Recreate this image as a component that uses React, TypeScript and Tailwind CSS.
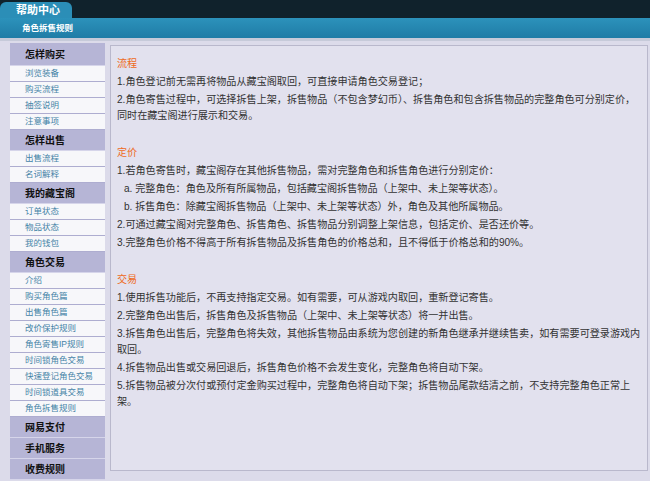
import React from 'react';

const font = { fontFamily: '"Liberation Sans", "Noto Sans CJK SC", sans-serif' };

type Group = { title: string; items: string[]; first?: boolean };

const groups: Group[] = [
  { title: '怎样购买', items: ['浏览装备', '购买流程', '抽签说明', '注意事项'], first: true },
  { title: '怎样出售', items: ['出售流程', '名词解释'] },
  { title: '我的藏宝阁', items: ['订单状态', '物品状态', '我的钱包'] },
  {
    title: '角色交易',
    items: [
      '介绍',
      '购买角色篇',
      '出售角色篇',
      '改价保护规则',
      '角色寄售IP规则',
      '时间锁角色交易',
      '快速登记角色交易',
      '时间锁道具交易',
      '角色拆售规则',
    ],
  },
  { title: '网易支付', items: [] },
  { title: '手机服务', items: [] },
  { title: '收费规则', items: [] },
];

const SideMenu = () => (
  <div className="w-[95px] shrink-0 flex flex-col">
    {groups.map((g) => (
      <div key={g.title}>
        <div
          className={`bg-[#b6b5d6] border-b border-[#d6d5ea] pl-[15px] flex items-center text-[10px] font-bold text-[#111] ${
            g.first ? 'h-[23px]' : 'h-[21px]'
          }`}
        >
          {g.title}
        </div>
        {g.items.map((it) => (
          <div
            key={it}
            className="h-[16px] bg-[#f7f7fa] border-b border-[#aeadd0] pl-[15px] flex items-center text-[8.5px] text-[#4483a6]"
          >
            {it}
          </div>
        ))}
      </div>
    ))}
  </div>
);

const Section = ({ title, children, first }: { title: string; children: React.ReactNode; first?: boolean }) => (
  <div className={first ? '' : 'mt-[20px]'}>
    <div className="text-[10.1px] leading-[17px] text-[#ee6a1c]">{title}</div>
    {children}
  </div>
);

const P = ({ children, indent }: { children: React.ReactNode; indent?: boolean }) => (
  <p className={`mt-[2px] text-[10.1px] leading-[16px] text-[#333] ${indent ? 'pl-[7px]' : ''}`}>{children}</p>
);

export default function App() {
  return (
    <div className="w-[650px] h-[481px] bg-[#dcdbea] overflow-hidden" style={font}>
      <div className="h-[18px] bg-[#10222c] flex items-end">
        <div className="w-[72px] h-[16px] rounded-t-[6px] bg-[#2b8eb7] pl-[16px] text-[11px] font-bold text-white leading-[16px]">
          帮助中心
        </div>
      </div>
      <div className="h-[20px] bg-gradient-to-b from-[#2c92bb] to-[#1f7ca6] pl-[22px] flex items-center text-[8.5px] font-bold text-white">
        角色拆售规则
      </div>
      <div className="h-[3px] bg-[#c6cad9]" />
      <div className="flex pl-[10px] pt-[2px] gap-[5px]">
        <SideMenu />
        <div className="w-[538px] h-[426px] mt-[2px] bg-[#e2e1ee] border border-[#b9b8cc] pl-[6px] pt-[9px]">
          <Section title="流程" first>
            <P>1.角色登记前无需再将物品从藏宝阁取回，可直接申请角色交易登记；</P>
            <P>
              2.角色寄售过程中，可选择拆售上架，拆售物品（不包含梦幻币）、拆售角色和包含拆售物品的完整角色可分别定价，
              <br />
              同时在藏宝阁进行展示和交易。
            </P>
          </Section>
          <Section title="定价">
            <P>1.若角色寄售时，藏宝阁存在其他拆售物品，需对完整角色和拆售角色进行分别定价：</P>
            <P indent>a. 完整角色：角色及所有所属物品，包括藏宝阁拆售物品（上架中、未上架等状态）。</P>
            <P indent>b. 拆售角色：除藏宝阁拆售物品（上架中、未上架等状态）外，角色及其他所属物品。</P>
            <P>2.可通过藏宝阁对完整角色、拆售角色、拆售物品分别调整上架信息，包括定价、是否还价等。</P>
            <P>3.完整角色价格不得高于所有拆售物品及拆售角色的价格总和，且不得低于价格总和的90%。</P>
          </Section>
          <Section title="交易">
            <P>1.使用拆售功能后，不再支持指定交易。如有需要，可从游戏内取回，重新登记寄售。</P>
            <P>2.完整角色出售后，拆售角色及拆售物品（上架中、未上架等状态）将一并出售。</P>
            <P>
              3.拆售角色出售后，完整角色将失效，其他拆售物品由系统为您创建的新角色继承并继续售卖，如有需要可登录游戏内
              <br />
              取回。
            </P>
            <P>4.拆售物品出售或交易回退后，拆售角色价格不会发生变化，完整角色将自动下架。</P>
            <P>
              5.拆售物品被分次付或预付定金购买过程中，完整角色将自动下架；拆售物品尾款结清之前，不支持完整角色正常上
              <br />
              架。
            </P>
          </Section>
        </div>
      </div>
    </div>
  );
}
